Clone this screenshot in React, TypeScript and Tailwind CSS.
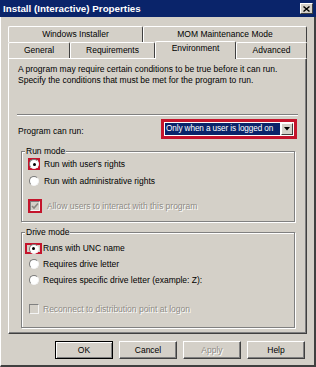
import React from "react";

const RED = "border-[#c4142c]";

function Radio({ checked }: { checked?: boolean }) {
  return (
    <div className="w-[10px] h-[10px] rounded-full bg-white border border-[#7a7a7a] border-r-[#f4f4f4] border-b-[#f4f4f4] flex items-center justify-center shrink-0">
      {checked && <div className="w-[3px] h-[3px] rounded-full bg-black" />}
    </div>
  );
}

function Check({ checked }: { checked?: boolean }) {
  return (
    <div className="w-[10px] h-[10px] bg-[#d4d0c8] border border-[#808080] border-r-[#f4f4f4] border-b-[#f4f4f4] flex items-center justify-center shrink-0">
      {checked && (
        <svg width="8" height="8" viewBox="0 0 8 8">
          <path d="M1 4 L3 6 L7 1.5" stroke="#8a8680" strokeWidth="1.6" fill="none" />
        </svg>
      )}
    </div>
  );
}

function Tab({ label, w, selected }: { label: string; w: string; selected?: boolean }) {
  return (
    <div
      className={`${w} ${
        selected ? "h-[18px] -mb-[1px] z-10 bg-[#d4d0c8] pt-[1px]" : "h-[16px] pt-[2px]"
      } relative border-t border-l border-white border-r border-r-[#404040] rounded-t-[2px] flex justify-center items-start leading-[11px] shrink-0`}
    >
      {label}
    </div>
  );
}

function Btn({ label, def, disabled }: { label: string; def?: boolean; disabled?: boolean }) {
  return (
    <div
      className={`w-[58px] h-[18px] flex items-center justify-center ${
        def
          ? "border border-black shadow-[inset_1px_1px_0_#fff,inset_-1px_-1px_0_#808080]"
          : "border border-t-white border-l-white border-r-[#404040] border-b-[#404040] shadow-[inset_-1px_-1px_0_#808080]"
      } ${disabled ? "text-[#8e8b85] [text-shadow:1px_1px_0_#fff]" : ""}`}
    >
      {label}
    </div>
  );
}

function Group({ title, children, className }: { title: string; children: React.ReactNode; className?: string }) {
  return (
    <fieldset
      className={`border border-[#808080] shadow-[inset_1px_1px_0_#fff,1px_1px_0_#fff] ${className ?? ""}`}
    >
      <legend className="ml-[3px] px-[1px] leading-[11px] bg-[#d4d0c8]">{title}</legend>
      {children}
    </fieldset>
  );
}

export default function App() {
  return (
    <div className="w-[316px] h-[367px] bg-[#d4d0c8] flex flex-col font-['Liberation_Sans',Arial,sans-serif] text-[8.5px] text-black overflow-hidden">
      <div className="h-[17px] bg-[#0a246a] flex items-center justify-between pl-[3px] pr-[3px] shrink-0">
        <span className="text-white font-bold text-[9.8px] leading-none">Install (Interactive) Properties</span>
        <div className="w-[13px] h-[11px] bg-[#d4d0c8] border border-t-white border-l-white border-r-[#404040] border-b-[#404040] flex items-center justify-center">
          <svg width="7" height="6" viewBox="0 0 7 6">
            <path d="M0.5 0.5 L6.5 5.5 M6.5 0.5 L0.5 5.5" stroke="#000" strokeWidth="1.4" />
          </svg>
        </div>
      </div>

      <div className="flex-1 flex flex-col border-l border-l-white border-r-2 border-r-[#404040] border-b-2 border-b-[#404040] pl-[7px] pt-[9px]">
        {/* tabs */}
        <div className="w-[299px] flex flex-col">
          <div className="flex h-[16px]">
            <Tab label="Windows Installer" w="w-[135px]" />
            <Tab label="MOM Maintenance Mode" w="w-[164px]" />
          </div>
          <div className="flex h-[16px] items-end">
            <Tab label="General" w="w-[62px]" />
            <Tab label="Requirements" w="w-[85px]" />
            <Tab label="Environment" w="w-[81px]" selected />
            <Tab label="Advanced" w="w-[71px]" />
          </div>
        </div>

        {/* panel */}
        <div className="w-[299px] h-[276px] border border-t-white border-l-white border-r-[#404040] border-b-[#404040] shadow-[inset_-1px_-1px_0_#808080] flex flex-col px-[9px]">
          <p className="mt-[5px] leading-[11px]">
            A program may require certain conditions to be true before it can run.
            <br />
            Specify the conditions that must be met for the program to run.
          </p>

          <div className="mt-[28px] h-[2px] border-t border-t-[#808080] border-b border-b-white mx-[-1px]" />

          <div className="mt-[3px] flex items-center justify-between">
            <span className="mt-[5px]">Program can run:</span>
            <div className={`w-[136px] h-[20px] border-[3px] ${RED} flex bg-white p-[1px]`}>
              <div className="flex-1 bg-[#0a246a] text-white leading-[12px] pl-[1px] whitespace-nowrap overflow-hidden text-[8.2px] tracking-[-0.1px]">
                Only when a user is logged on
              </div>
              <div className="ml-[1px] w-[12px] bg-[#d4d0c8] border border-t-white border-l-white border-r-[#404040] border-b-[#404040] flex items-center justify-center">
                <svg width="6" height="4" viewBox="0 0 6 4">
                  <path d="M0 0 H6 L3 3.5 Z" fill="#000" />
                </svg>
              </div>
            </div>
          </div>

          <Group title="Run mode" className="mt-[7px] ml-[3px] mr-[2px] h-[76px]">
            <div className="flex flex-col pl-[7px]">
              <div className="flex items-center h-[12px] mt-[1px]">
                <div className={`w-[12px] h-[12px] border-2 ${RED} flex items-center justify-center -ml-[1px]`}>
                  <Radio checked />
                </div>
                <span className="ml-[4px]">Run with user's rights</span>
              </div>
              <div className="flex items-center h-[12px] mt-[5px]">
                <div className="w-[12px] flex justify-center -ml-[1px]">
                  <Radio />
                </div>
                <span className="ml-[4px]">Run with administrative rights</span>
              </div>
              <div className="flex items-center h-[14px] mt-[12px]">
                <div className={`w-[14px] h-[14px] border-2 ${RED} flex items-center justify-center -ml-[1px]`}>
                  <Check checked />
                </div>
                <span className="ml-[5px] text-[#8e8b85] [text-shadow:1px_1px_0_#fff]">
                  Allow users to interact with this program
                </span>
              </div>
            </div>
          </Group>

          <Group title="Drive mode" className="mt-[5px] ml-[3px] mr-[2px] h-[101px]">
            <div className="flex flex-col pl-[3px]">
              <div className="flex items-center h-[11px] mt-[5px]">
                <div className={`w-[17px] h-[11px] border-2 ${RED} flex items-center justify-center`}>
                  <Radio checked />
                </div>
                <span className="ml-[1px]">Runs with UNC name</span>
              </div>
              <div className="flex items-center h-[12px] mt-[4px]">
                <div className="w-[17px] flex justify-center">
                  <Radio />
                </div>
                <span className="ml-[1px]">Requires drive letter</span>
              </div>
              <div className="flex items-center h-[12px] mt-[4px]">
                <div className="w-[17px] flex justify-center">
                  <Radio />
                </div>
                <span className="ml-[1px]">Requires specific drive letter (example: Z):</span>
              </div>
              <div className="flex items-center h-[12px] mt-[17px]">
                <div className="w-[17px] flex justify-center">
                  <Check />
                </div>
                <span className="ml-[1px] text-[#8e8b85] [text-shadow:1px_1px_0_#fff]">
                  Reconnect to distribution point at logon
                </span>
              </div>
            </div>
          </Group>
        </div>

        {/* buttons */}
        <div className="w-[299px] mt-[7px] flex justify-end gap-[6px] pr-[2px]">
          <Btn label="OK" def />
          <Btn label="Cancel" />
          <Btn label="Apply" disabled />
          <Btn label="Help" />
        </div>
      </div>
    </div>
  );
}
